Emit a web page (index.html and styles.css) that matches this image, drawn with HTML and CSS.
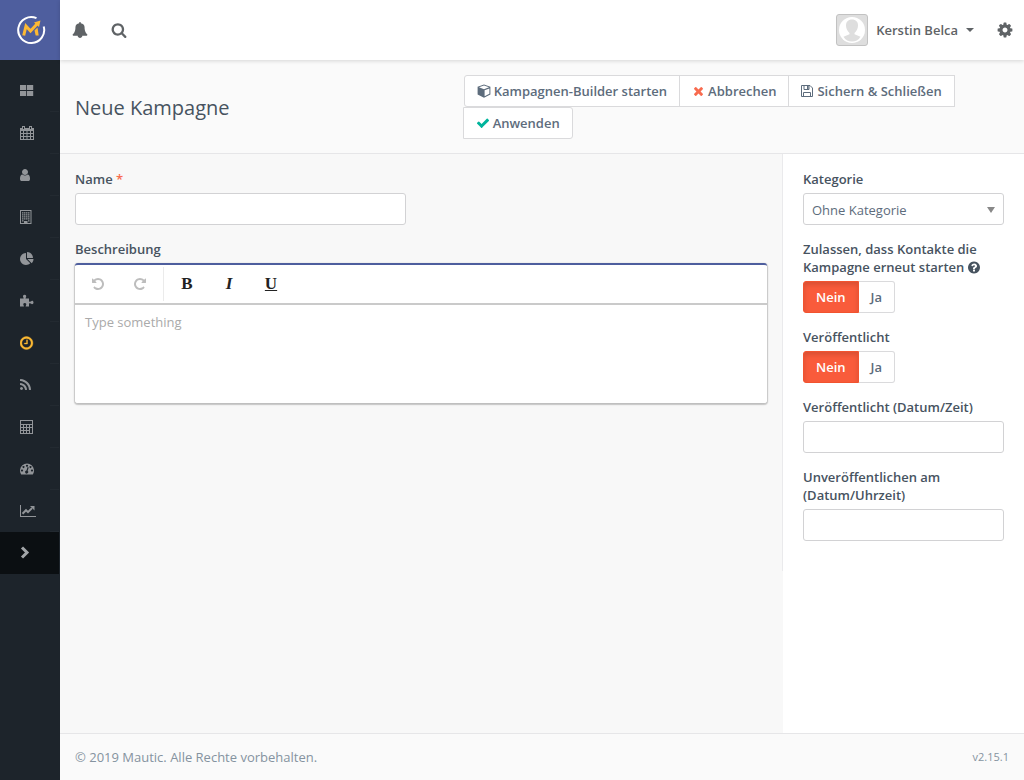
FILE: index.html
```html
<!DOCTYPE html>
<html lang="de">
<head>
<meta charset="utf-8">
<meta name="viewport" content="width=device-width, initial-scale=1">
<title>Neue Kampagne | Mautic</title>
<link rel="stylesheet" href="styles.css">
</head>
<body>
<div class="app">
  <aside class="sidebar">
    <a class="logo" href="#" aria-label="Mautic">
      <svg width="30" height="30" viewBox="0 0 30 30" fill="none">
        <path d="M20.500 3.200A13 13 0 1 0 27.700 11.500" stroke="#fff" stroke-width="2"/>
        <path d="M7.700 20.500L10 11L14.500 16L21 9" stroke="#fdb933" stroke-width="3"/>
        <path d="M18.500 15.500L21.500 12.500L22.700 20.500H19.700Z" fill="#fdb933"/>
        <path d="M18 7.500L24.500 5.500L23 12Z" fill="#fdb933"/>
      </svg>
    </a>
    <nav class="menu" aria-label="Hauptmenü">
      <a href="#" aria-label="Dashboard"><svg class="icon" viewBox="0 0 14 14"><path d="M0 1h6.200v5H0zM7 1h6.200v5H7zM0 7h6.200v5H0zM7 7h6.200v5H7z"/></svg></a>
      <a href="#" aria-label="Kalender"><svg class="icon" viewBox="0 0 14 14"><path fill-rule="evenodd" d="M0 2h2V0h3v2h4V0h3v2h2v12H0zM1 5v2h2V5zm3 0v2h2.500V5zm3.500 0v2H10V5zM11 5v2h2V5zM1 8v2h2V8zm3 0v2h2.500V8zm3.500 0v2H10V8zM11 8v2h2V8zM1 11v2h2v-2zm3 0v2h2.500v-2zm3.500 0v2H10v-2zm3.500 0v2h2v-2zM3 1v2h1V1zm7 0v2h1V1z"/></svg></a>
      <a href="#" aria-label="Kontakte"><svg class="icon icon-narrow" viewBox="256 0 1280 1792"><path d="M1536 1399q0 109-62.500 187t-150.500 78h-854q-88 0-150.500-78t-62.500-187q0-85 8.500-160.500t31.500-152 58.500-131 94-89 134.500-34.500q131 128 313 128t313-128q76 0 134.500 34.500t94 89 58.500 131 31.500 152 8.500 160.500zm-256-887q0 159-112.500 271.500t-271.500 112.500-271.500-112.500-112.500-271.500 112.500-271.500 271.500-112.500 271.500 112.500 112.500 271.500z"/></svg></a>
      <a href="#" aria-label="Unternehmen"><svg class="icon" viewBox="0 0 14 14"><path fill-rule="evenodd" d="M0 0h11.500v14H0zM1 1v12h3v-2h3.500v2h3V1z"/><path d="M2 2.200h1.500v1.300H2zM4 2.200h1.500v1.300H4zM6 2.200h1.500v1.300H6zM8 2.200h1.500v1.300H8zM2 4.200h1.500v1.300H2zM4 4.200h1.500v1.300H4zM6 4.200h1.500v1.300H6zM8 4.200h1.500v1.300H8zM2 6.200h1.500v1.300H2zM4 6.200h1.500v1.300H4zM6 6.200h1.500v1.300H6zM8 6.200h1.500v1.300H8zM2 8.200h1.500v1.300H2zM4 8.200h1.500v1.300H4zM6 8.200h1.500v1.300H6zM8 8.200h1.500v1.300H8zM2 10.200h1.500v1.300H2zM8 10.200h1.500v1.300H8z"/></svg></a>
      <a href="#" aria-label="Segmente"><svg class="icon" viewBox="0 0 1792 1792"><path d="M768 890l546 546q-106 108-247.500 168t-298.500 60q-209 0-385.500-103t-279.500-279.500-103-385.500 103-385.500 279.500-279.500 385.500-103v762zm187 6h773q0 157-60 298.500t-168 247.500zm709-128h-768v-768q209 0 385.500 103t279.500 279.500 103 385.500z"/></svg></a>
      <a href="#" aria-label="Komponenten"><svg class="icon" viewBox="0 0 14 14"><path d="M0 4.500h3.700L3.300 3.200C2.600 2.500 3 .8 4.600.8S6.700 2.500 5.900 3.200L5.500 4.500H9v3.300l2-.4c.7-1 2.500-.6 2.500 1.100s-1.800 2.100-2.500 1.100L9 9.200V12.500H5.600l.4-1.300c.7-1 .2-2.200-1.200-2.200s-1.900 1.200-1.200 2.200L4 12.500H0z"/></svg></a>
      <a class="active" href="#" aria-label="Kampagnen"><svg class="icon" viewBox="128 64 1664 1664"><path d="M1024 544v448q0 14-9 23t-23 9h-320q-14 0-23-9t-9-23v-64q0-14 9-23t23-9h224v-352q0-14 9-23t23-9h64q14 0 23 9t9 23zm416 352q0-148-73-273t-198-198-273-73-273 73-198 198-73 273 73 273 198 198 273 73 273-73 198-198 73-273zm224 0q0 209-103 385.500t-279.500 279.500-385.500 103-385.500-103-279.500-279.500-103-385.500 103-385.500 279.500-279.500 385.500-103 385.500 103 279.500 279.500 103 385.500z" stroke="currentColor" stroke-width="40"/></svg></a>
      <a href="#" aria-label="Kanäle"><svg class="icon" viewBox="192 0 1792 1792"><path d="M576 1344q0 80-56 136t-136 56-136-56-56-136 56-136 136-56 136 56 56 136zm512 123q2 28-17 48-18 21-47 21h-135q-25 0-43-16.500t-20-41.500q-22-229-184.500-391.500t-391.500-184.500q-25-2-41.500-20t-16.500-43v-135q0-29 21-47 17-17 43-17h5q160 13 306 80.500t259 181.500q114 113 181.500 259t80.500 306zm512 2q2 27-18 47-18 20-46 20h-143q-26 0-44.500-17.500t-19.500-42.500q-12-215-101-408.500t-231.500-336-336-231.500-408.500-102q-25-1-42.500-19.500t-17.500-43.500v-143q0-28 20-46 18-18 44-18h3q262 13 501.500 120t425.500 294q187 186 294 425.500t120 501.500z"/></svg></a>
      <a href="#" aria-label="Punkte"><svg class="icon" viewBox="0 0 14 14"><path fill-rule="evenodd" d="M0 0h13v14H0zM1 1v3h11V1zm0 4v2h2V5zm3 0v2h2V5zm3 0v2h2V5zm3 0v2h2V5zM1 8v2h2V8zm3 0v2h2V8zm3 0v2h2V8zM1 11v2h2v-2zm3 0v2h2v-2zm3 0v2h2v-2zm3-3v5h2V8z"/></svg></a>
      <a href="#" aria-label="Stufen"><svg class="icon" viewBox="0 0 14 14"><path fill-rule="evenodd" d="M1.200 12.500A7 7 0 1 1 12.800 12.500zM2 7.500a1 1 0 1 0 .01 0zm1.500-3.400a1 1 0 1 0 .01 0zM7 2.700a1 1 0 1 0 .01 0zm3.500 1.400a1 1 0 1 0 .01 0zM12 7.500a1 1 0 1 0 .01 0zM7.600 5L6.500 8.600a1.500 1.500 0 1 0 1.100.3L8.700 5.400z"/></svg></a>
      <a href="#" aria-label="Berichte"><svg class="icon icon-wide" viewBox="0 0 16 14"><path d="M0 1h1v11h15v1H0z"/><path d="M2.500 9.800L6 6.200l2 2L12 4.100" fill="none" stroke="currentColor" stroke-width="2"/><path d="M10 2h4.500v4.500z"/></svg></a>
      <a class="collapse" href="#" aria-label="Menü ausklappen"><svg class="icon" viewBox="0 0 14 14"><path d="M2 1.500l5 5-5 5" fill="none" stroke="currentColor" stroke-width="3"/></svg></a>
    </nav>
  </aside>

  <div class="page">
    <header class="topbar">
      <div class="topbar-tools">
        <button type="button" aria-label="Benachrichtigungen"><svg class="icon-top" viewBox="0 0 1792 1792"><path d="M1728 1408q0 52-38 90t-90 38h-448q0 106-75 181t-181 75-181-75-75-181h-448q-52 0-90-38t-38-90q50-42 91-88t85-119.500 74.500-158.500 50-206 19.500-260q0-152 117-282.500t307-158.500q-8-19-8-39 0-40 28-68t68-28 68 28 28 68q0 20-8 39 190 28 307 158.500t117 282.500q0 139 19.500 260t50 206 74.500 158.500 85 119.500 91 88z"/></svg></button>
        <button type="button" aria-label="Suche"><svg class="icon-top" viewBox="0 0 1792 1792"><path d="M1216 832q0-185-131.500-316.500t-316.500-131.500-316.500 131.500-131.500 316.500 131.500 316.500 316.500 131.500 316.500-131.500 131.500-316.500zm512 832q0 52-38 90t-90 38q-54 0-90-38l-343-342q-179 124-399 124-143 0-273.500-55.500t-225-150-150-225-55.500-273.500 55.500-273.500 150-225 225-150 273.500-55.500 273.500 55.500 225 150 150 225 55.500 273.500q0 220-124 399l343 343q37 37 37 90z"/></svg></button>
      </div>
      <div class="topbar-user">
        <button type="button" class="user">
          <svg width="32" height="32" viewBox="0 0 32 32"><rect x=".5" y=".5" width="31" height="31" rx="2.500" fill="#dedede" stroke="#c2c2c2"/><circle cx="16" cy="16" r="13" fill="#fff"/><path d="M16 5.500c4 0 6 2.500 6 6s-1.500 5.500-3.500 7.500v1.200l6 2.500C22.500 26 19.500 27.500 16 27.500S9.500 26 7.500 22.700l6-2.500V19C11.500 17 10 15 10 11.500s2-6 6-6z" fill="#dedede"/></svg>
          <span>Kerstin Belca</span>
          <i class="caret"></i>
        </button>
        <button type="button" aria-label="Einstellungen"><svg class="icon-top" viewBox="64 64 1664 1664"><path d="M1152 896q0-106-75-181t-181-75-181 75-75 181 75 181 181 75 181-75 75-181zm512-109v222q0 12-8 23t-20 13l-185 28q-19 54-39 91 35 50 107 138 10 12 10 25t-9 23q-27 37-99 108t-94 71q-12 0-26-9l-138-108q-44 23-91 38-16 136-29 186-7 28-36 28h-222q-14 0-24.500-8.500t-11.500-21.500l-28-184q-49-16-90-37l-141 107q-10 9-25 9-14 0-25-11-126-114-165-168-7-10-7-23 0-12 8-23 15-21 51-66.500t54-70.500q-27-50-41-99l-183-27q-13-2-21-12.500t-8-23.500v-222q0-12 8-23t19-13l186-28q14-46 39-92-40-57-107-138-10-12-10-24 0-10 9-23 26-36 98.500-107.500t94.500-71.500q13 0 26 10l138 107q44-23 91-38 16-136 29-186 7-28 36-28h222q14 0 24.500 8.500t11.500 21.500l28 184q49 16 90 37l142-107q9-9 24-9 13 0 25 10 129 119 165 170 7 8 7 22 0 12-8 23-15 21-51 66.500t-54 70.500q26 50 41 98l183 28q13 2 21 12.500t8 23.500z"/></svg></button>
      </div>
    </header>

    <div class="page-header">
      <h1>Neue Kampagne</h1>
      <div class="actions">
        <button type="button" class="btn"><svg class="icon" viewBox="0 0 14 14"><path fill-rule="evenodd" d="M7 .4L13.400 2.800V10.600L7 13.800L.6 10.600V2.800zM7 1.500L2 3.300L7 5.200L12 3.300zM7.600 6.200V12.200L12.400 9.800V4.400z"/></svg>Kampagnen-Builder starten</button>
        <button type="button" class="btn"><svg class="icon icon-small icon-danger" viewBox="302 238 1188 1316"><path d="M1490 1322q0 40-28 68l-136 136q-28 28-68 28t-68-28l-294-294-294 294q-28 28-68 28t-68-28l-136-136q-28-28-28-68t28-68l294-294-294-294q-28-28-28-68t28-68l136-136q28-28 68-28t68 28l294 294 294-294q28-28 68-28t68 28l136 136q28 28 28 68t-28 68l-294 294 294 294q28 28 28 68z"/></svg>Abbrechen</button>
        <button type="button" class="btn"><svg class="icon icon-save" viewBox="0 0 12 14"><path d="M.5 1.500H9L11.500 4V12.500H.5zM3 1.500V5.500H8V1.500M2.500 12.500V8.500H9.500V12.500" fill="none" stroke="currentColor"/><path d="M6 2h1.500v3H6z"/></svg>Sichern &amp; Schließen</button>
        <button type="button" class="btn"><svg class="icon icon-success" viewBox="0 0 1792 1792"><path d="M1671 566q0 40-28 68l-724 724-136 136q-28 28-68 28t-68-28l-136-136-362-362q-28-28-28-68t28-68l136-136q28-28 68-28t68 28l294 295 656-657q28-28 68-28t68 28l136 136q28 28 28 68z"/></svg>Anwenden</button>
      </div>
    </div>

    <form class="content">
      <main class="main">
        <div class="field field-half">
          <label for="name">Name <span class="required">*</span></label>
          <input id="name" type="text" required>
        </div>
        <div class="field">
          <label for="description">Beschreibung</label>
          <div class="editor">
            <div class="editor-bar">
              <button type="button" disabled aria-label="Rückgängig"><svg class="icon" viewBox="0 0 1792 1792"><path id="turn" d="M1664 896q0 156-61 298t-164 245-245 164-298 61q-172 0-327-72.500t-264-204.500q-7-10-6.500-22.500t8.500-20.500l137-138q10-9 25-9 16 2 23 12 73 95 179 147t225 52q104 0 198.500-40.500t163.500-109.500 109.500-163.500 40.500-198.500-40.500-198.500-109.500-163.500-163.500-109.500-198.500-40.500q-98 0-188 35.500t-160 101.500l137 138q31 30 14 69-17 40-59 40h-448q-26 0-45-19t-19-45v-448q0-42 40-59 39-17 69 14l130 129q107-101 244.500-156.500t284.500-55.500q156 0 298 61t245 164 164 245 61 298z"/></svg></button>
              <button type="button" disabled aria-label="Wiederholen"><svg class="icon" viewBox="0 0 1792 1792"><use href="#turn" transform="translate(1792 0) scale(-1 1)"/></svg></button>
              <span class="divider"></span>
              <button type="button" aria-label="Fett"><b>B</b></button>
              <button type="button" aria-label="Kursiv"><i>I</i></button>
              <button type="button" aria-label="Unterstrichen"><u>U</u></button>
            </div>
            <textarea id="description" placeholder="Type something"></textarea>
          </div>
        </div>
      </main>
      <aside class="side">
        <div class="side-fields">
          <div class="field">
            <label for="category">Kategorie</label>
            <div class="select">
              <select id="category"><option>Ohne Kategorie</option></select>
            </div>
          </div>
          <div class="field" role="radiogroup" aria-labelledby="restart-label">
            <span class="label" id="restart-label">Zulassen, dass Kontakte die Kampagne erneut starten <svg class="icon icon-help" viewBox="128 64 1536 1664"><path d="M1024 1376v-192q0-14-9-23t-23-9h-192q-14 0-23 9t-9 23v192q0 14 9 23t23 9h192q14 0 23-9t9-23zm256-672q0-88-55.500-163t-138.500-116-170-41q-243 0-371 213-15 24 8 42l132 100q7 6 19 6 16 0 25-12 53-68 86-92 34-24 86-24 48 0 85.500 26t37.500 59q0 38-20 61t-68 45q-63 28-115.500 86.500t-52.500 125.500v36q0 14 9 23t23 9h192q14 0 23-9t9-23q0-19 21.500-49.500t54.500-49.500q32-18 49-28.500t46-35 44.500-48 28-60.500 12.500-81zm384 192q0 209-103 385.500t-279.500 279.500-385.500 103-385.500-103-279.500-279.500-103-385.500 103-385.500 279.500-279.500 385.500-103 385.500 103 279.500 279.500 103 385.500z"/></svg></span>
            <div class="toggle">
              <label><input type="radio" name="restart" checked><span>Nein</span></label>
              <label><input type="radio" name="restart"><span>Ja</span></label>
            </div>
          </div>
          <div class="field" role="radiogroup" aria-labelledby="published-label">
            <span class="label" id="published-label">Veröffentlicht</span>
            <div class="toggle">
              <label><input type="radio" name="published" checked><span>Nein</span></label>
              <label><input type="radio" name="published"><span>Ja</span></label>
            </div>
          </div>
          <div class="field">
            <label for="publish-up">Veröffentlicht (Datum/Zeit)</label>
            <input id="publish-up" type="text">
          </div>
          <div class="field">
            <label for="publish-down">Unveröffentlichen am (Datum/Uhrzeit)</label>
            <input id="publish-down" type="text">
          </div>
        </div>
      </aside>
    </form>

    <footer class="footer">
      <span>© 2019 Mautic. Alle Rechte vorbehalten.</span>
      <small>v2.15.1</small>
    </footer>
  </div>
</div>
</body>
</html>
```
FILE: styles.css
```css
* { box-sizing: border-box; }

body {
  margin: 0;
  font: 13px/18px "Open Sans", "Noto Sans", sans-serif;
  color: #47535f;
  background: #f8f8f8;
}

button, input, select, textarea { font: inherit; color: inherit; }

button {
  padding: 0;
  border: 0;
  background: none;
  cursor: pointer;
}

.app { display: flex; min-height: 100vh; }

.icon { width: 14px; height: 14px; fill: currentColor; }
.icon-narrow { width: 10px; }
.icon-wide { width: 16px; }
.icon-top { display: block; width: 16px; height: 16px; fill: currentColor; }

/* Sidebar */
.sidebar { flex: 0 0 60px; background: #1d242b; }

.logo {
  display: flex;
  align-items: center;
  justify-content: center;
  height: 60px;
  padding-left: 2px;
  background: #4e5e9e;
}

.menu {
  display: flex;
  flex-direction: column;
  margin-right: 1px;
  padding-top: 10px;
}

.menu a {
  display: flex;
  align-items: center;
  height: 42px;
  padding-left: 20px;
  color: #929599;
  background: linear-gradient(#232a31, #232a31) right bottom / 9px 1px no-repeat;
}

.menu .active { color: #fdb933; }
.menu .collapse { color: #a2a5a8; background: #0b0f12; }

/* Top bar */
.page { display: flex; flex: 1; flex-direction: column; min-width: 0; }

.topbar {
  display: flex;
  justify-content: space-between;
  height: 60px;
  padding: 0 11px 0 12px;
  color: #5f6366;
  background: #fff;
  box-shadow: 0 1px 4px rgba(0, 0, 0, .15);
  z-index: 1;
}

.topbar-tools, .topbar-user, .user { display: flex; align-items: center; }
.topbar-tools { gap: 23px; }
.topbar-user { gap: 23px; }
.user { gap: 8px; font-weight: 600; }

.caret {
  border: 4px solid transparent;
  border-top-color: currentColor;
  border-bottom: 0;
}

/* Page header */
.page-header {
  display: grid;
  grid-template-columns: 5fr 7fr;
  align-items: center;
  padding: 15px 0 14px;
  border-bottom: 1px solid #e6e6e8;
  background: #fafafa;
}

h1 {
  margin: 0;
  padding: 2px 0 0 15px;
  font-size: 20px;
  font-weight: 400;
  line-height: 28px;
}

.actions { display: flex; flex-wrap: wrap; padding: 0 15px 0 2px; }

.btn {
  display: flex;
  align-items: center;
  gap: 3px;
  height: 32px;
  margin-left: -1px;
  padding: 0 12px;
  border: 1px solid #dadadc;
  background: #fff;
  color: #5d6c7c;
  font-weight: 600;
}

.btn:first-child { margin-left: 0; border-radius: 3px 0 0 3px; }
.btn:last-child { border-radius: 0 3px 3px 0; }
.icon-small { width: 9px; height: 10px; margin: 0 2px; }
.icon-save { width: 12px; margin-right: 1px; }
.icon-danger { color: #f86b4f; }
.icon-success { color: #00b49c; }

/* Form */
.content { display: grid; flex: 1; grid-template-columns: 3fr 1fr; }
.main { padding: 16px 16px 16px 15px; }
.side { background: #fff; }

.side-fields {
  margin-left: -1px;
  padding: 16px 20px 15px;
  border-left: 1px solid #eaeaec;
}

.field { margin-bottom: 15px; }
.field-half { width: 50%; padding-right: 15px; }

.field > label, .label {
  display: block;
  margin-bottom: 5px;
  font-weight: 600;
}

.required { color: #f86b4f; }

.field > input, .select select {
  display: block;
  width: 100%;
  height: 32px;
  padding: 0 8px;
  border: 1px solid #d2d2d4;
  border-radius: 3px;
  background: #fff;
}

.icon-help { width: 12px; height: 13px; vertical-align: -2px; }

.select { display: grid; align-items: center; }
.select::after {
  content: "";
  grid-area: 1 / 1;
  justify-self: end;
  margin: 2px 9px 0 0;
  border: 4px solid transparent;
  border-top: 6px solid #888;
  border-bottom: 0;
  pointer-events: none;
}
.select select {
  grid-area: 1 / 1;
  padding-top: 2px;
  appearance: none;
  color: #5d6c7c;
}

.toggle { display: flex; }
.toggle label { position: relative; }
.toggle input { position: absolute; inset: 0; margin: 0; opacity: 0; }

.toggle span {
  display: block;
  padding: 6px 12px;
  border: 1px solid #dadadc;
  border-left-width: 0;
  border-radius: 0 3px 3px 0;
  background: #fff;
  color: #5d6c7c;
  font-weight: 600;
}

.toggle label:first-child span { border-left-width: 1px; border-radius: 3px 0 0 3px; }

.toggle input:checked + span {
  border-color: #f2532f;
  background: #f95b3b;
  box-shadow: inset 0 3px 5px rgba(0, 0, 0, .125);
  color: #fff;
}

/* Editor */
.editor {
  border-top: 2px solid #4e5e9e;
  border-radius: 3px;
  background: #fff;
  box-shadow: 0 1px 3px rgba(0, 0, 0, .12), 0 1px 1px 1px rgba(0, 0, 0, .16);
}

.editor-bar {
  display: flex;
  align-items: center;
  height: 40px;
  padding-left: 2px;
  border-bottom: 2px solid #cacaca;
}

.editor-bar button {
  width: 42px;
  height: 38px;
  color: #222;
  font: bold 17px/38px "Liberation Serif", serif;
}
.editor-bar button:disabled { color: #bdbdbd; }
.editor-bar .icon { vertical-align: -2px; }
.divider { width: 1px; height: 34px; margin: 0 2px; background: #ebebeb; }

.editor textarea {
  display: block;
  width: 100%;
  height: 98px;
  padding: 8px 10px;
  border: 0;
  border-radius: 0 0 3px 3px;
  resize: none;
}
.editor textarea::placeholder { color: #aaa; }

/* Footer */
.footer {
  display: flex;
  align-items: center;
  justify-content: space-between;
  height: 47px;
  padding: 0 15px;
  border-top: 1px solid #e6e6e8;
  background: #fafafa;
  color: #8593a0;
}
.footer small { font-size: 11px; }
```
